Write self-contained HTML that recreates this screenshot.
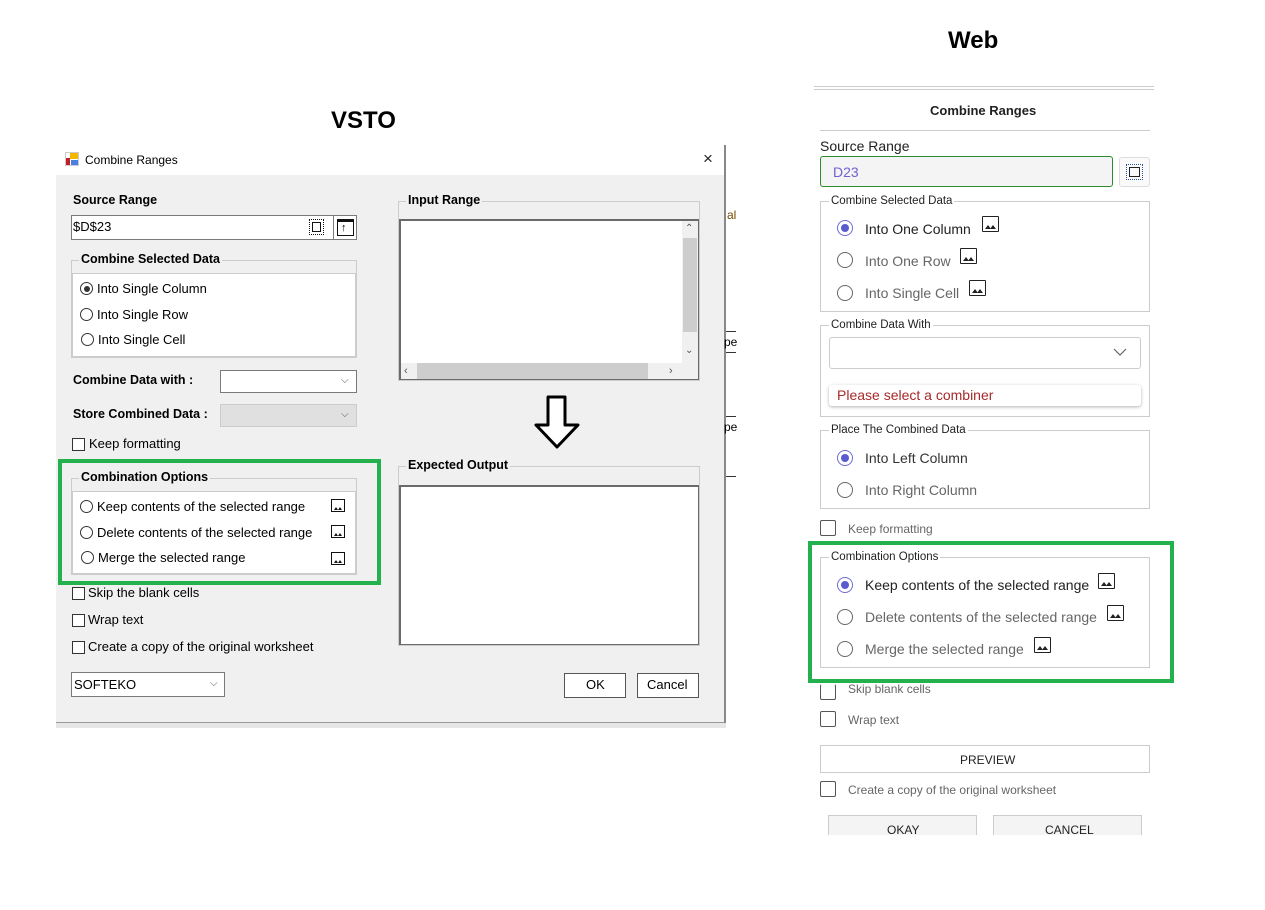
<!DOCTYPE html>
<html><head><meta charset="utf-8">
<style>
*{margin:0;padding:0;box-sizing:border-box}
body{width:1265px;height:910px;background:#fff;position:relative;overflow:hidden;font-family:"Liberation Sans",sans-serif;color:#000}
.a{position:absolute}
.t{position:absolute;font-size:13px;line-height:14px;white-space:nowrap}
.b{font-weight:bold;font-size:12.5px}
.rad{position:absolute;width:13px;height:13px;border:1px solid #333;border-radius:50%;background:#fff}
.chk{position:absolute;width:13px;height:13px;border:1px solid #333;background:#fff}
.img{position:absolute;width:14px;height:13px;border:1.5px solid #111;background:#fff}
.img:before,.img:after{content:"";position:absolute;bottom:1px;width:0;height:0;border-left:2.5px solid transparent;border-right:2.5px solid transparent;border-bottom:3px solid #111}
.img:before{left:2px}.img:after{left:6px}
.wt{position:absolute;font-size:14px;line-height:16px;white-space:nowrap;color:#444}
.wrad{position:absolute;width:16px;height:16px;border:1.5px solid #666;border-radius:50%;background:#fff}
.wrad.on{border-color:#6b6bd6}
.wrad.on:after{content:"";position:absolute;left:2.5px;top:2.5px;width:8px;height:8px;border-radius:50%;background:#5b5bd0}
.wchk{position:absolute;width:16px;height:16px;border:1.3px solid #555;border-radius:2px;background:#fff}
.fs{position:absolute;border:1px solid #ccc}
.lg{position:absolute;background:#fff;font-size:11.5px;line-height:13px;padding:0 2px;color:#222;white-space:nowrap}
.wimg{position:absolute;width:17px;height:16px;border:1.5px solid #222;border-radius:1px;background:#fff}
.wimg:before,.wimg:after{content:"";position:absolute;bottom:2px;width:0;height:0;border-left:3px solid transparent;border-right:3px solid transparent;border-bottom:4px solid #222}
.wimg:before{left:2px}.wimg:after{left:7px}
</style></head><body>

<div class="t" style="left:331px;top:107px;font-size:24px;line-height:28px;font-weight:bold">VSTO</div>
<div class="t" style="left:948px;top:27px;font-size:24px;line-height:28px;font-weight:bold">Web</div>

<div class="a" style="left:56px;top:145px;width:670px;height:578px;background:#f0f0f0;border-bottom:1px solid #999"></div>
<div class="a" style="left:56px;top:145px;width:670px;height:30px;background:#fff"></div>
<div class="a" style="left:724px;top:145px;width:2px;height:578px;background:#888"></div>
<div class="a" style="left:56px;top:723px;width:680px;height:5px;background:#e6e6e6"></div>
<div class="a" style="left:726px;top:145px;width:10px;height:583px;background:#fff"></div>
<div class="t" style="left:727px;top:208px;color:#7a4a00;font-size:12px">al</div>
<div class="a" style="left:726px;top:331px;width:10px;height:1px;background:#333"></div>
<div class="a" style="left:726px;top:352px;width:10px;height:1px;background:#333"></div>
<div class="t" style="left:724px;top:335px;font-size:12px">pe</div>
<div class="a" style="left:726px;top:416px;width:10px;height:1px;background:#333"></div>
<div class="t" style="left:724px;top:420px;font-size:12px">pe</div>
<div class="a" style="left:726px;top:476px;width:10px;height:1px;background:#333"></div>

<svg class="a" style="left:65px;top:152px" width="14" height="14"><rect x="0.5" y="0.5" width="13" height="13" fill="#fff" stroke="#ccc"/><rect x="5" y="1" width="8" height="6" fill="#f3b700"/><rect x="6" y="8" width="7" height="5" fill="#4a7ee0"/><rect x="1" y="6" width="4" height="7" fill="#c0202a"/></svg>
<div class="t" style="left:85px;top:153px;font-size:12px">Combine Ranges</div>
<div class="t" style="left:703px;top:150px;font-size:17px;line-height:18px;color:#222">×</div>

<div class="t b" style="left:73px;top:193px">Source Range</div>
<div class="a" style="left:71px;top:215px;width:286px;height:25px;background:#fff;border:1px solid #7a7a7a"></div>
<div class="t" style="left:73px;top:220px">$D$23</div>
<div class="a" style="left:309px;top:219px;width:15px;height:16px;border:1.5px dotted #111"></div>
<div class="a" style="left:312px;top:222px;width:9px;height:10px;border:1.5px solid #111"></div>
<div class="a" style="left:333px;top:216px;width:1px;height:23px;background:#7a7a7a"></div>
<div class="a" style="left:337px;top:219px;width:17px;height:17px;border:1.5px solid #111;border-top-width:3px"></div>
<div class="t" style="left:341px;top:221px;font-size:11px">↑</div>

<div class="a" style="left:71px;top:260px;width:286px;height:98px;border:1px solid #ccc"></div>
<div class="a" style="left:72px;top:273px;width:284px;height:84px;background:#fff;border:1px solid #ccc"></div>
<div class="t b" style="left:79px;top:252px;background:#f0f0f0;padding:0 2px">Combine Selected Data</div>
<div class="rad" style="left:80px;top:282px"></div><div class="a" style="left:83.5px;top:285.5px;width:6px;height:6px;border-radius:50%;background:#333"></div>
<div class="t" style="left:97px;top:282px">Into Single Column</div>
<div class="rad" style="left:80px;top:308px"></div><div class="t" style="left:97px;top:308px">Into Single Row</div>
<div class="rad" style="left:81px;top:333px"></div><div class="t" style="left:98px;top:333px">Into Single Cell</div>

<div class="t b" style="left:73px;top:373px">Combine Data with :</div>
<div class="a" style="left:220px;top:370px;width:137px;height:23px;background:#fff;border:1px solid #7a7a7a"></div>
<div class="t" style="left:341px;top:374px;font-size:10px;color:#555">⌵</div>
<div class="t b" style="left:73px;top:407px">Store Combined Data :</div>
<div class="a" style="left:220px;top:404px;width:137px;height:23px;background:#e0e0e0;border:1px solid #ccc"></div>
<div class="t" style="left:341px;top:408px;font-size:10px;color:#555">⌵</div>
<div class="chk" style="left:72px;top:438px"></div><div class="t" style="left:89px;top:437px">Keep formatting</div>

<div class="a" style="left:71px;top:478px;width:286px;height:97px;border:1px solid #ccc"></div>
<div class="a" style="left:72px;top:491px;width:284px;height:83px;background:#fff;border:1px solid #ccc"></div>
<div class="t b" style="left:79px;top:470px;background:#f0f0f0;padding:0 2px">Combination Options</div>
<div class="rad" style="left:80px;top:500px"></div><div class="t" style="left:97px;top:500px">Keep contents of the selected range</div><div class="img" style="left:331px;top:499px"></div>
<div class="rad" style="left:80px;top:526px"></div><div class="t" style="left:97px;top:526px">Delete contents of the selected range</div><div class="img" style="left:331px;top:525px"></div>
<div class="rad" style="left:81px;top:551px"></div><div class="t" style="left:98px;top:551px">Merge the selected range</div><div class="img" style="left:331px;top:552px"></div>
<div class="a" style="left:58px;top:459px;width:323px;height:126px;border:4px solid #22b14c"></div>

<div class="chk" style="left:72px;top:587px"></div><div class="t" style="left:88px;top:586px">Skip the blank cells</div>
<div class="chk" style="left:72px;top:614px"></div><div class="t" style="left:88px;top:613px">Wrap text</div>
<div class="chk" style="left:72px;top:641px"></div><div class="t" style="left:88px;top:640px">Create a copy of the original worksheet</div>
<div class="a" style="left:71px;top:672px;width:154px;height:25px;background:#fff;border:1px solid #7a7a7a"></div>
<div class="t" style="left:74px;top:678px">SOFTEKO</div>
<div class="t" style="left:210px;top:677px;font-size:10px;color:#555">⌵</div>
<div class="a" style="left:564px;top:673px;width:62px;height:25px;background:#fff;border:1px solid #555"></div>
<div class="t" style="left:586px;top:678px">OK</div>
<div class="a" style="left:637px;top:673px;width:62px;height:25px;background:#fff;border:1px solid #555"></div>
<div class="t" style="left:647px;top:678px">Cancel</div>

<div class="a" style="left:398px;top:201px;width:302px;height:180px;border:1px solid #ccc"></div>
<div class="t b" style="left:406px;top:193px;background:#f0f0f0;padding:0 2px">Input Range</div>
<div class="a" style="left:399px;top:219px;width:300px;height:161px;background:#fff;border:2px solid #6a6a6a;border-right-width:1px;border-bottom-width:1px"></div>
<div class="a" style="left:682px;top:221px;width:16px;height:142px;background:#f0f0f0"></div>
<div class="a" style="left:683px;top:238px;width:14px;height:94px;background:#cdcdcd"></div>
<div class="a" style="left:401px;top:363px;width:297px;height:16px;background:#f0f0f0"></div>
<div class="a" style="left:417px;top:363px;width:231px;height:16px;background:#cdcdcd"></div>
<div class="t" style="left:685px;top:222px;font-size:10px;color:#555">⌃</div>
<div class="t" style="left:685px;top:344px;font-size:10px;color:#555">⌄</div>
<div class="t" style="left:404px;top:364px;font-size:11px;color:#555">‹</div>
<div class="t" style="left:669px;top:364px;font-size:11px;color:#555">›</div>

<svg class="a" style="left:530px;top:393px" width="56" height="60"><path d="M18 4 H35 V32 H48 L27 54 L6 32 H18 Z" fill="#fff" stroke="#000" stroke-width="3" stroke-linejoin="round"/></svg>

<div class="a" style="left:398px;top:466px;width:302px;height:180px;border:1px solid #ccc"></div>
<div class="t b" style="left:406px;top:458px;background:#f0f0f0;padding:0 2px">Expected Output</div>
<div class="a" style="left:399px;top:485px;width:300px;height:160px;background:#fff;border:1px solid #6a6a6a;border-top-width:2px;border-left-width:2px"></div>

<!-- WEB -->
<div class="a" style="left:814px;top:86px;width:340px;height:1px;background:#ccc"></div>
<div class="a" style="left:814px;top:89px;width:340px;height:1px;background:#ccc"></div>
<div class="t" style="left:930px;top:103px;font-size:13px;line-height:15px;color:#222;font-weight:bold">Combine Ranges</div>
<div class="a" style="left:820px;top:130px;width:330px;height:1px;background:#ccc"></div>
<div class="wt" style="left:820px;top:138px;color:#222">Source Range</div>
<div class="a" style="left:820px;top:156px;width:293px;height:31px;background:#f4f4f4;border:1px solid #2e8b2e;border-radius:3px"></div>
<div class="wt" style="left:833px;top:164px;color:#7060d0">D23</div>
<div class="a" style="left:1119px;top:157px;width:31px;height:30px;border:1px solid #ddd;border-radius:3px;background:#fafafa"></div>
<div class="a" style="left:1126px;top:164px;width:17px;height:16px;border:1.5px dotted #3050a0"></div>
<div class="a" style="left:1129px;top:167px;width:11px;height:10px;border:1.5px solid #222"></div>

<div class="fs" style="left:820px;top:201px;width:330px;height:111px"></div>
<div class="lg" style="left:829px;top:195px">Combine Selected Data</div>
<div class="wrad on" style="left:837px;top:220px"></div><div class="wt" style="left:865px;top:221px;color:#222">Into One Column</div><div class="wimg" style="left:982px;top:216px"></div>
<div class="wrad" style="left:837px;top:252px"></div><div class="wt" style="left:865px;top:253px;color:#666">Into One Row</div><div class="wimg" style="left:960px;top:248px"></div>
<div class="wrad" style="left:837px;top:285px"></div><div class="wt" style="left:865px;top:285px;color:#666">Into Single Cell</div><div class="wimg" style="left:969px;top:280px"></div>

<div class="fs" style="left:820px;top:325px;width:330px;height:92px"></div>
<div class="lg" style="left:829px;top:319px">Combine Data With</div>
<div class="a" style="left:829px;top:337px;width:312px;height:32px;border:1px solid #ccc;border-radius:3px;background:#fff"></div>
<svg class="a" style="left:1113px;top:348px" width="14" height="9"><path d="M1 1 L7 7 L13 1" fill="none" stroke="#666" stroke-width="1.2"/></svg>
<div class="a" style="left:829px;top:385px;width:312px;height:21px;background:#fff;border-radius:3px;box-shadow:0 1px 3px rgba(0,0,0,.3)"></div>
<div class="wt" style="left:837px;top:387px;color:#a52a2a">Please select a combiner</div>

<div class="fs" style="left:820px;top:430px;width:330px;height:79px"></div>
<div class="lg" style="left:829px;top:424px">Place The Combined Data</div>
<div class="wrad on" style="left:837px;top:450px"></div><div class="wt" style="left:865px;top:450px;color:#333">Into Left Column</div>
<div class="wrad" style="left:837px;top:482px"></div><div class="wt" style="left:865px;top:482px;color:#666">Into Right Column</div>

<div class="wchk" style="left:820px;top:520px"></div><div class="wt" style="left:848px;top:521px;font-size:12px;color:#666">Keep formatting</div>

<div class="fs" style="left:820px;top:557px;width:330px;height:111px"></div>
<div class="lg" style="left:829px;top:551px">Combination Options</div>
<div class="wrad on" style="left:837px;top:577px"></div><div class="wt" style="left:865px;top:577px;color:#222">Keep contents of the selected range</div><div class="wimg" style="left:1098px;top:573px"></div>
<div class="wrad" style="left:837px;top:609px"></div><div class="wt" style="left:865px;top:609px;color:#666">Delete contents of the selected range</div><div class="wimg" style="left:1107px;top:605px"></div>
<div class="wrad" style="left:837px;top:641px"></div><div class="wt" style="left:865px;top:641px;color:#666">Merge the selected range</div><div class="wimg" style="left:1034px;top:637px"></div>
<div class="a" style="left:808px;top:541px;width:366px;height:142px;border:4px solid #22b14c"></div>

<div class="wchk" style="left:820px;top:684px;border-top-color:transparent"></div><div class="wt" style="left:848px;top:681px;font-size:12px;color:#666">Skip blank cells</div>
<div class="wchk" style="left:820px;top:711px"></div><div class="wt" style="left:848px;top:712px;font-size:12px;color:#666">Wrap text</div>
<div class="a" style="left:820px;top:745px;width:330px;height:28px;border:1px solid #ccc;background:#fff"></div>
<div class="wt" style="left:960px;top:752px;font-size:12px;color:#222">PREVIEW</div>
<div class="wchk" style="left:820px;top:781px"></div><div class="wt" style="left:848px;top:782px;font-size:12px;color:#666">Create a copy of the original worksheet</div>
<div class="a" style="left:828px;top:815px;width:149px;height:30px;border:1px solid #ccc;border-bottom:none;background:#f4f4f4"></div>
<div class="wt" style="left:887px;top:822px;font-size:12px;color:#222">OKAY</div>
<div class="a" style="left:993px;top:815px;width:149px;height:30px;border:1px solid #ccc;border-bottom:none;background:#f4f4f4"></div>
<div class="wt" style="left:1045px;top:822px;font-size:12px;color:#222">CANCEL</div>
<div class="a" style="left:800px;top:835px;width:400px;height:75px;background:#fff"></div>
</body></html>
